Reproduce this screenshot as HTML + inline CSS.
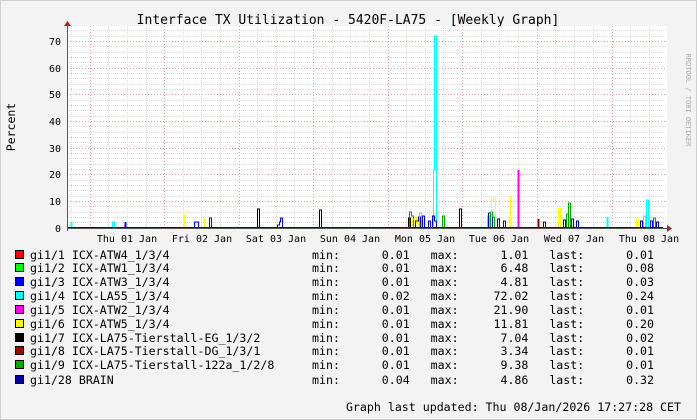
<!DOCTYPE html><html><head><style>
body{margin:0;background:#f3f3f3}
svg{display:block;font-family:"DejaVu Sans Mono","Liberation Mono",monospace}
svg text{white-space:pre}
</style></head><body>
<svg width="697" height="420" xmlns="http://www.w3.org/2000/svg" xml:space="preserve">
<rect x="0" y="0" width="697" height="420" fill="#f3f3f3"/>
<rect x="0.5" y="0.5" width="696" height="419" fill="none" stroke="#cfcfcf"/>
<rect x="67" y="26" width="600" height="202" fill="#fff"/>
<text x="348" y="24" font-size="13" text-anchor="middle" fill="#000">Interface TX Utilization - 5420F-LA75 - [Weekly Graph]</text>
<text x="15" y="127" font-size="11.5" text-anchor="middle" transform="rotate(-90 15 127)">Percent</text>
<text x="686" y="100" font-size="7" fill="#aaa" text-anchor="middle" transform="rotate(90 686 100)">RRDTOOL / TOBI OETIKER</text>
<g stroke="#ddd" stroke-dasharray="1,1" stroke-width="1">
<line x1="67" x2="667" y1="222.5" y2="222.5"/><line x1="67" x2="667" y1="217.5" y2="217.5"/><line x1="67" x2="667" y1="212.5" y2="212.5"/><line x1="67" x2="667" y1="206.5" y2="206.5"/>
<line x1="67" x2="667" y1="196.5" y2="196.5"/><line x1="67" x2="667" y1="190.5" y2="190.5"/><line x1="67" x2="667" y1="185.5" y2="185.5"/><line x1="67" x2="667" y1="180.5" y2="180.5"/>
<line x1="67" x2="667" y1="169.5" y2="169.5"/><line x1="67" x2="667" y1="164.5" y2="164.5"/><line x1="67" x2="667" y1="158.5" y2="158.5"/><line x1="67" x2="667" y1="153.5" y2="153.5"/>
<line x1="67" x2="667" y1="142.5" y2="142.5"/><line x1="67" x2="667" y1="137.5" y2="137.5"/><line x1="67" x2="667" y1="132.5" y2="132.5"/><line x1="67" x2="667" y1="126.5" y2="126.5"/>
<line x1="67" x2="667" y1="116.5" y2="116.5"/><line x1="67" x2="667" y1="110.5" y2="110.5"/><line x1="67" x2="667" y1="105.5" y2="105.5"/><line x1="67" x2="667" y1="100.5" y2="100.5"/>
<line x1="67" x2="667" y1="89.5" y2="89.5"/><line x1="67" x2="667" y1="84.5" y2="84.5"/><line x1="67" x2="667" y1="78.5" y2="78.5"/><line x1="67" x2="667" y1="73.5" y2="73.5"/>
<line x1="67" x2="667" y1="62.5" y2="62.5"/><line x1="67" x2="667" y1="57.5" y2="57.5"/><line x1="67" x2="667" y1="52.5" y2="52.5"/><line x1="67" x2="667" y1="46.5" y2="46.5"/>
<line x1="67" x2="667" y1="36.5" y2="36.5"/><line x1="67" x2="667" y1="30.5" y2="30.5"/>
<line y1="26" y2="228" x1="71.5" x2="71.5"/><line y1="26" y2="228" x1="108.5" x2="108.5"/><line y1="26" y2="228" x1="127.5" x2="127.5"/><line y1="26" y2="228" x1="146.5" x2="146.5"/>
<line y1="26" y2="228" x1="183.5" x2="183.5"/><line y1="26" y2="228" x1="201.5" x2="201.5"/><line y1="26" y2="228" x1="220.5" x2="220.5"/>
<line y1="26" y2="228" x1="257.5" x2="257.5"/><line y1="26" y2="228" x1="276.5" x2="276.5"/><line y1="26" y2="228" x1="294.5" x2="294.5"/>
<line y1="26" y2="228" x1="332.5" x2="332.5"/><line y1="26" y2="228" x1="350.5" x2="350.5"/><line y1="26" y2="228" x1="369.5" x2="369.5"/>
<line y1="26" y2="228" x1="406.5" x2="406.5"/><line y1="26" y2="228" x1="425.5" x2="425.5"/><line y1="26" y2="228" x1="443.5" x2="443.5"/>
<line y1="26" y2="228" x1="481.5" x2="481.5"/><line y1="26" y2="228" x1="499.5" x2="499.5"/><line y1="26" y2="228" x1="518.5" x2="518.5"/>
<line y1="26" y2="228" x1="555.5" x2="555.5"/><line y1="26" y2="228" x1="574.5" x2="574.5"/><line y1="26" y2="228" x1="593.5" x2="593.5"/>
<line y1="26" y2="228" x1="630.5" x2="630.5"/><line y1="26" y2="228" x1="649.5" x2="649.5"/>
</g>
<g stroke="#f2a0a0" stroke-dasharray="1,2" stroke-width="1">
<line x1="67" x2="667" y1="201.5" y2="201.5"/><line x1="67" x2="667" y1="174.5" y2="174.5"/><line x1="67" x2="667" y1="148.5" y2="148.5"/><line x1="67" x2="667" y1="121.5" y2="121.5"/><line x1="67" x2="667" y1="94.5" y2="94.5"/><line x1="67" x2="667" y1="68.5" y2="68.5"/><line x1="67" x2="667" y1="41.5" y2="41.5"/>
<line y1="26" y2="228" x1="90.5" x2="90.5"/><line y1="26" y2="228" x1="164.5" x2="164.5"/><line y1="26" y2="228" x1="239.5" x2="239.5"/><line y1="26" y2="228" x1="313.5" x2="313.5"/><line y1="26" y2="228" x1="388.5" x2="388.5"/><line y1="26" y2="228" x1="462.5" x2="462.5"/><line y1="26" y2="228" x1="537.5" x2="537.5"/><line y1="26" y2="228" x1="612.5" x2="612.5"/>
</g>
<g font-size="10" fill="#000" text-anchor="end">
<text x="61" y="232">0</text><text x="61" y="205">10</text><text x="61" y="178">20</text><text x="61" y="152">30</text><text x="61" y="125">40</text><text x="61" y="98">50</text><text x="61" y="72">60</text><text x="61" y="45">70</text>
</g>
<g font-size="10" fill="#000" text-anchor="middle">
<text x="127" y="242">Thu 01 Jan</text><text x="202" y="242">Fri 02 Jan</text><text x="276" y="242">Sat 03 Jan</text><text x="350" y="242">Sun 04 Jan</text><text x="425" y="242">Mon 05 Jan</text><text x="499" y="242">Tue 06 Jan</text><text x="574" y="242">Wed 07 Jan</text><text x="649" y="242">Thu 08 Jan</text>
</g>
<g fill="none" stroke-width="1" transform="translate(0.5,0)">
<path d="M71 228V222" stroke="#0ff" stroke-width="2"/>
<path d="M112 228V222h2v6" stroke="#0ff"/>
<path d="M125 228V222" stroke="#00f" stroke-width="2"/>
<path d="M184 228V214" stroke="#ff0" stroke-width="2"/>
<path d="M194 228V222h4v6" stroke="#00f"/>
<path d="M204 228V218" stroke="#ff0" stroke-width="2"/>
<path d="M209 228V218h2v10" stroke="#00f"/>
<path d="M257 228V209h2v19" stroke="#000"/>
<path d="M277 228V225h2v-3h1v-4h2v10" stroke="#00f"/>
<path d="M319 228V210h2v18" stroke="#000"/>
<path d="M409 228V212h2v4h2v12" stroke="#0a0"/>
<path d="M412 228V219h2v4h2v-6h2v11" stroke="#ff0"/>
<path d="M408 228V218h2v10" stroke="#000"/>
<path d="M415 228V221h3v-4h2v11M422 228V216h2v12M428 228V221h2v7" stroke="#00c"/>
<path d="M419 228V213h2v15" stroke="#0ff"/>
<path d="M433 228V170h1V36h2v192" stroke="#0ff"/>
<path d="M432 228V216h2v5h2v7" stroke="#00c"/>
<path d="M442 228V216h2v12" stroke="#0a0"/>
<path d="M459 228V209h2v19" stroke="#000"/>
<path d="M487 228V216h2v12" stroke="#0ff"/>
<path d="M488 228V213h2v5h2v10" stroke="#00c"/>
<path d="M490 228V212h2v5h2v11" stroke="#0a0"/>
<path d="M491 228V200h2v-2h2v30" stroke="#ff0"/>
<path d="M497 228V219h2v9M503 228V221h2v7" stroke="#00c"/>
<path d="M510 228V196" stroke="#ff0" stroke-width="2"/>
<path d="M518 228V170" stroke="#f0f" stroke-width="2"/>
<path d="M538 228V219" stroke="#a00" stroke-width="2"/>
<path d="M543 228V222h2v6" stroke="#00c"/>
<path d="M558 228V208h2v20" stroke="#ff0"/>
<path d="M566 228V214h2v14" stroke="#0a0"/>
<path d="M568 228V203h2v25" stroke="#0a0"/>
<path d="M563 228V220h2v8M571 228V219h2v9M576 228V221h2v7" stroke="#00c"/>
<path d="M607 228V217" stroke="#0ff" stroke-width="2"/>
<path d="M636 228V219h2v9" stroke="#ff0"/>
<path d="M643 228V216h2v12" stroke="#0ff"/>
<path d="M646 228V200h2v28" stroke="#0ff"/>
<path d="M640 228V221h2v7M650 228V221h2v7M656 228V222h2v6" stroke="#00c"/>
<path d="M653 228V218h2v10" stroke="#0a0"/>
</g>
<line x1="67" x2="663" y1="227.5" y2="227.5" stroke="#00c"/>
<line x1="67" x2="667" y1="228.5" y2="228.5" stroke="#555"/>
<line x1="67.5" x2="67.5" y1="26" y2="231" stroke="#555"/>
<polygon points="667,225 667,232 672,228.5" fill="#a22"/>
<polygon points="64,26 71,26 67.5,21" fill="#a22"/>
<g font-size="11.6" fill="#000">
<rect x="15.5" y="250.5" width="8" height="8" fill="#f00" stroke="#000"/><text x="30" y="259">gi1/1 ICX-ATW4_1/3/4</text><text x="312" y="259">min:      0.01   max:      1.01   last:      0.01</text>
<rect x="15.5" y="263.5" width="8" height="8" fill="#0f0" stroke="#000"/><text x="30" y="272">gi1/2 ICX-ATW1_1/3/4</text><text x="312" y="272">min:      0.01   max:      6.48   last:      0.08</text>
<rect x="15.5" y="277.5" width="8" height="8" fill="#00f" stroke="#000"/><text x="30" y="286">gi1/3 ICX-ATW3_1/3/4</text><text x="312" y="286">min:      0.01   max:      4.81   last:      0.03</text>
<rect x="15.5" y="291.5" width="8" height="8" fill="#0ff" stroke="#000"/><text x="30" y="300">gi1/4 ICX-LA55_1/3/4</text><text x="312" y="300">min:      0.02   max:     72.02   last:      0.24</text>
<rect x="15.5" y="305.5" width="8" height="8" fill="#f0f" stroke="#000"/><text x="30" y="314">gi1/5 ICX-ATW2_1/3/4</text><text x="312" y="314">min:      0.01   max:     21.90   last:      0.01</text>
<rect x="15.5" y="319.5" width="8" height="8" fill="#ff0" stroke="#000"/><text x="30" y="328">gi1/6 ICX-ATW5_1/3/4</text><text x="312" y="328">min:      0.01   max:     11.81   last:      0.20</text>
<rect x="15.5" y="333.5" width="8" height="8" fill="#000" stroke="#000"/><text x="30" y="342">gi1/7 ICX-LA75-Tierstall-EG_1/3/2</text><text x="312" y="342">min:      0.01   max:      7.04   last:      0.02</text>
<rect x="15.5" y="346.5" width="8" height="8" fill="#a00" stroke="#000"/><text x="30" y="355">gi1/8 ICX-LA75-Tierstall-DG_1/3/1</text><text x="312" y="355">min:      0.01   max:      3.34   last:      0.01</text>
<rect x="15.5" y="360.5" width="8" height="8" fill="#0a0" stroke="#000"/><text x="30" y="369">gi1/9 ICX-LA75-Tierstall-122a_1/2/8</text><text x="312" y="369">min:      0.01   max:      9.38   last:      0.01</text>
<rect x="15.5" y="375.5" width="8" height="8" fill="#00a" stroke="#000"/><text x="30" y="384">gi1/28 BRAIN</text><text x="312" y="384">min:      0.04   max:      4.86   last:      0.32</text>
<text x="681" y="411" text-anchor="end">Graph last updated: Thu 08/Jan/2026 17:27:28 CET</text>
</g>
</svg>
</body></html>
